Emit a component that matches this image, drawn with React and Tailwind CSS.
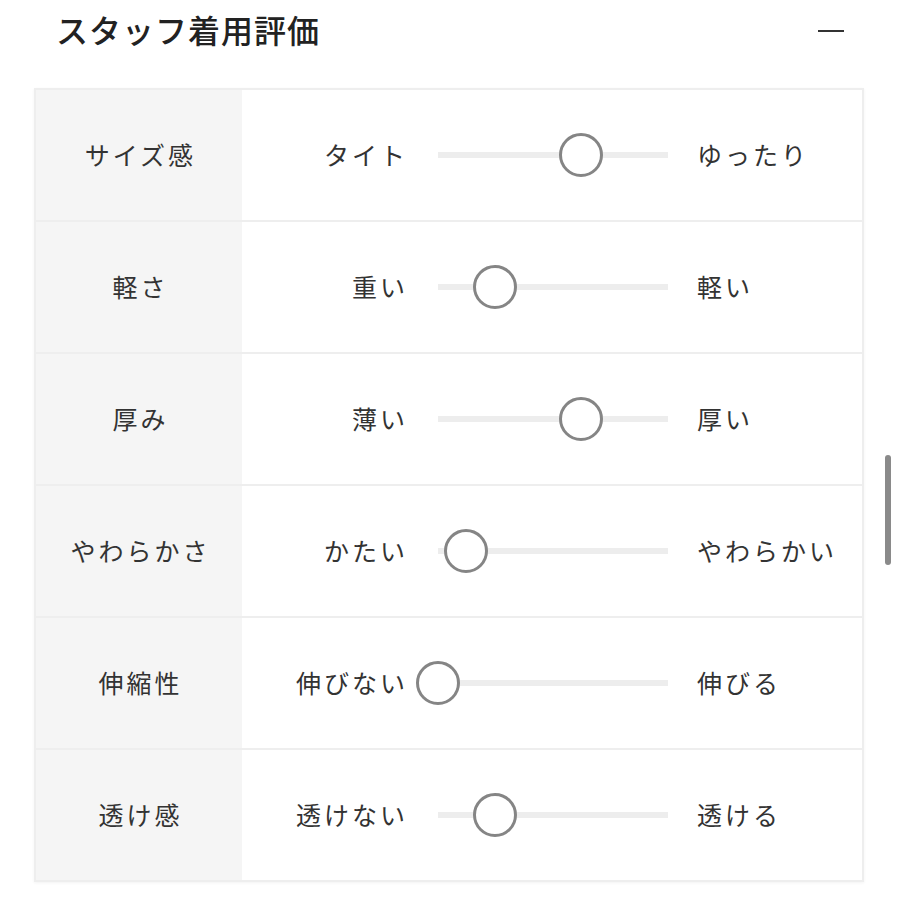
import React from "react";

const ROWS = [
  { label: "サイズ感", left: "タイト", right: "ゆったり", pos: 143 },
  { label: "軽さ", left: "重い", right: "軽い", pos: 57 },
  { label: "厚み", left: "薄い", right: "厚い", pos: 143 },
  { label: "やわらかさ", left: "かたい", right: "やわらかい", pos: 28 },
  { label: "伸縮性", left: "伸びない", right: "伸びる", pos: 0 },
  { label: "透け感", left: "透けない", right: "透ける", pos: 57 },
];

function Slider({ pos }) {
  return (
    <div className="relative w-[230px] h-[44px] flex items-center shrink-0">
      <div className="w-full h-[6px] bg-[#ededed]" />
      <div
        className="absolute top-0 w-[44px] h-[44px] rounded-full border-[3px] border-[#858585] bg-white"
        style={{ left: pos - 22 }}
      />
    </div>
  );
}

export default function App() {
  return (
    <div
      className="relative w-[900px] h-[900px] bg-white overflow-hidden text-[#333]"
      style={{ fontFamily: '"Noto Sans CJK JP", "Noto Sans", sans-serif' }}
    >
      <div className="flex items-center justify-between h-[60px] pl-[56px] pr-[56px] pb-[2px]">
        <h2 className="text-[32px] font-medium text-[#222] tracking-[1px]">スタッフ着用評価</h2>
        <div className="w-[26px] h-[2px] bg-[#333] mt-[4px]" />
      </div>

      <div className="mt-[28px] ml-[34px] w-[830px] border-2 border-[#eeeeee] shadow-[0_1px_3px_rgba(0,0,0,0.05)]">
        {ROWS.map((r, i) => (
          <div
            key={r.label}
            className={i > 0 ? "flex h-[132px] border-t-2 border-[#eeeeee]" : "flex h-[130px]"}
          >
            <div className="w-[206px] shrink-0 bg-[#f5f5f5] flex items-center justify-center text-[25px] tracking-[3px] pl-[3px]">
              {r.label}
            </div>
            <div className="flex flex-1 items-center">
              <div className="w-[166px] flex justify-end text-[25px] tracking-[3px]">
                {r.left}
              </div>
              <div className="w-[30px]" />
              <Slider pos={r.pos} />
              <div className="ml-[29px] text-[25px] tracking-[3px]">{r.right}</div>
            </div>
          </div>
        ))}
      </div>

      {/* overlay scrollbar */}
      <div className="absolute left-[885px] top-[455px] w-[6px] h-[110px] rounded-full bg-[#8a8a8a]" />
    </div>
  );
}
